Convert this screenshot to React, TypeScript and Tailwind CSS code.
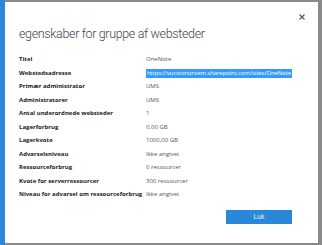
const rows: [string, string][] = [
  ["Titel", "OneNote"],
  ["Webstedsadresse", "https://vucstorstroem.sharepoint.com/sites/OneNote"],
  ["Primær administrator", "UMS"],
  ["Administratorer", "UMS"],
  ["Antal underordnede websteder", "1"],
  ["Lagerforbrug", "0,00 GB"],
  ["Lagerkvote", "1000,00 GB"],
  ["Advarselsniveau", "Ikke angivet"],
  ["Ressourceforbrug", "0 ressourcer"],
  ["Kvote for serverressourcer", "300 ressourcer"],
  ["Niveau for advarsel om ressourceforbrug", "Ikke angivet"],
];

export default function App() {
  return (
    <div className="flex h-[245px] w-[322px] bg-[#8a8a8a] font-['Open_Sans',sans-serif]">
      <div className="w-[5px] bg-[#2b88d8]" />
      <div className="mt-[2px] mb-[2px] mr-[4px] flex flex-1 flex-col bg-white">
        <div className="flex h-[18px] items-end justify-end pr-[13px]">
          <svg width="6" height="6" viewBox="0 0 6 6" className="text-[#555]">
            <path d="M0.5 0.5 L5.5 5.5 M5.5 0.5 L0.5 5.5" stroke="currentColor" strokeWidth="1.1" />
          </svg>
        </div>
        <h1 className="mt-[6px] ml-[14px] font-['Roboto',sans-serif] text-[12.5px] leading-[16px] font-light tracking-[-0.35px] text-[#444]">
          egenskaber for gruppe af websteder
        </h1>
        <div className="mt-[11px] ml-[14px] grid grid-cols-[127px_1fr] text-[6px]">
          {rows.map(([label, value]) => (
            <div key={label} className="contents">
              <div className="flex h-[13.5px] items-center font-bold whitespace-nowrap text-[#222]">{label}</div>
              <div className="flex h-[13.5px] items-center whitespace-nowrap">
                {value.startsWith("https") ? (
                  <span className="bg-[#3399ff] px-[1px] leading-[9px] tracking-[-0.1px] text-white">{value}</span>
                ) : (
                  <span className="text-[#555]">{value}</span>
                )}
              </div>
            </div>
          ))}
        </div>
        <div className="mt-[8px] flex justify-end pr-[26px]">
          <button className="h-[14px] w-[66px] bg-[#2b88d8] text-[6.5px] text-white">Luk</button>
        </div>
      </div>
    </div>
  );
}
